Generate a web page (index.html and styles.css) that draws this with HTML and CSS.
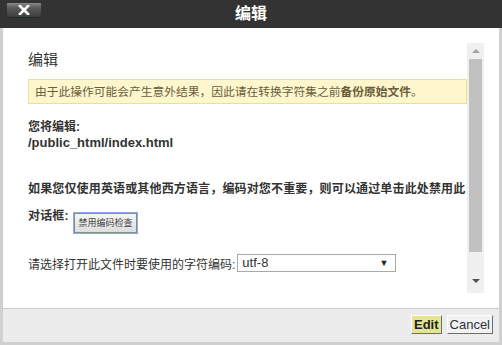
FILE: index.html
```html
<!DOCTYPE html>
<html lang="zh-CN">
<head>
    <meta charset="UTF-8">
    <title>编辑</title>
    <link rel="stylesheet" href="styles.css">
</head>
<body>
    <div class="dialog">
        <div class="dialog-header">
            <button class="close-btn" aria-label="close">
                <svg width="12" height="10" viewBox="0 0 12 10">
                    <path d="M2 1 L10 9 M10 1 L2 9" stroke="#fff" stroke-width="2.6" stroke-linecap="square"/>
                </svg>
            </button>
            <h1>编辑</h1>
        </div>

        <div class="frame">
            <div class="dialog-body">
                <div class="content">
                    <h2>编辑</h2>
                    <div class="warning">由于此操作可能会产生意外结果，因此请在转换字符集之前<b>备份原始文件</b>。</div>

                    <div class="file-info">
                        <b>您将编辑:</b><br>
                        <b class="path">/public_html/index.html</b>
                    </div>

                    <p class="disable-note"><span>如果您仅使用英语或其他西方语言，编码对您不重要，则可以通过单击此处禁用此</span><br><span>对话框:</span> <button class="small-btn">禁用编码检查</button></p>

                    <div class="charset-row">
                        <span>请选择打开此文件时要使用的字符编码:</span>
                        <div class="select">utf-8<span class="caret">▼</span></div>
                    </div>
                </div>

                <div class="scrollbar">
                    <div class="arrow up"></div>
                    <div class="thumb"></div>
                    <div class="arrow down"></div>
                </div>
            </div>

            <div class="dialog-footer">
                <button class="btn btn-primary">Edit</button>
                <button class="btn">Cancel</button>
            </div>
        </div>
    </div>
</body>
</html>
```

FILE: styles.css
```css
:root {
    --border-color: #d0d0d0;
    --text-color: #333;
    --warn-bg: #fef6cd;
    --warn-border: #ebe093;
    --warn-text: #6b5d3a;
}

* {
    box-sizing: border-box;
}

body {
    margin: 0;
    font-family: 'Liberation Sans', 'Noto Sans CJK SC', sans-serif;
    color: var(--text-color);
    background: #fff;
}

.dialog {
    width: 502px;
    height: 345px;
    display: flex;
    flex-direction: column;
}

.dialog-header {
    height: 28px;
    background-color: #333;
    display: flex;
    align-items: center;
    justify-content: center;
    position: relative;
}

.dialog-header h1 {
    margin: 0;
    color: #fff;
    font-size: 16px;
    font-weight: bold;
    line-height: 28px;
}

/* sits on top of the header bar */
.close-btn {
    position: absolute;
    left: 7px;
    top: 3px;
    width: 34px;
    height: 15px;
    padding: 0;
    border: none;
    border-bottom: 1px solid #1d2a30;
    border-radius: 0 0 4px 4px;
    background: linear-gradient(#8a8a8a, #5a5a5a 35%, #3d3d3d);
    display: flex;
    align-items: center;
    justify-content: center;
}

.frame {
    flex: 1;
    display: flex;
    flex-direction: column;
    border: 3px solid var(--border-color);
    border-top: none;
}

.dialog-body {
    height: 280px;
    display: flex;
    padding-left: 25px;
}

.content {
    width: 439px;
    padding-top: 22px;
    font-size: 12px;
}

.content h2 {
    margin: 0 0 9px;
    font-size: 15px;
    font-weight: normal;
    line-height: 20px;
}

.warning {
    height: 25px;
    background-color: var(--warn-bg);
    border: 1px solid var(--warn-border);
    color: var(--warn-text);
    padding: 0 6px;
    font-size: 11.75px;
    line-height: 23px;
}

.file-info {
    margin-top: 16px;
    line-height: 15px;
    font-size: 12px;
}

.file-info .path {
    font-size: 13px;
}

.disable-note {
    margin: 25px 0 0;
    font-weight: bold;
    line-height: 27px;
    letter-spacing: 0.15px;
}

.small-btn {
    font-family: 'Noto Sans CJK SC', sans-serif;
    font-size: 9px;
    line-height: 16px;
    letter-spacing: 0;
    height: 20px;
    width: 63px;
    padding: 0;
    margin-left: 2px;
    vertical-align: -6px;
    background: linear-gradient(#f4f4f4, #dedede);
    border: 1px solid #8c8c8c;
    outline: 1px solid #88aeea;
    color: #444;
}

.charset-row {
    margin-top: 21px;
    display: flex;
    align-items: center;
}

.select {
    margin-left: 2px;
    width: 159px;
    height: 18px;
    border: 1px solid #a9a9a9;
    padding: 0 4px;
    font-size: 13px;
    line-height: 16px;
    display: flex;
    justify-content: space-between;
}

.caret {
    font-size: 9px;
    color: #222;
    padding-right: 3px;
}

.scrollbar {
    width: 17px;
    height: 250px;
    margin-top: 15px;
    background-color: #f0f0f0;
    display: flex;
    flex-direction: column;
    align-items: center;
}

.arrow {
    width: 0;
    height: 0;
    border-left: 4px solid transparent;
    border-right: 4px solid transparent;
    margin: 6px 0;
}

.arrow.up {
    border-bottom: 4px solid #a3a3a3;
}

.arrow.down {
    border-top: 4px solid #505050;
    margin-top: 27px;
}

.thumb {
    width: 13px;
    height: 193px;
    background-color: #c1c1c1;
}

.dialog-footer {
    flex: 1;
    background-color: #ececec;
    border-top: 1px solid #cdcdcd;
    display: flex;
    justify-content: flex-end;
    align-items: center;
    gap: 5px;
    padding: 0 6px 3px 0;
}

.btn {
    font-family: 'Liberation Sans', sans-serif;
    font-size: 13px;
    height: 19px;
    padding: 0 2px;
    background-color: #f2f2f2;
    color: #2d3140;
    border: 1px solid #fff;
    border-right-color: #6e6e6e;
    border-bottom-color: #6e6e6e;
}

.btn-primary {
    font-weight: bold;
    background-color: #e3e68c;
    color: #222;
}
```
